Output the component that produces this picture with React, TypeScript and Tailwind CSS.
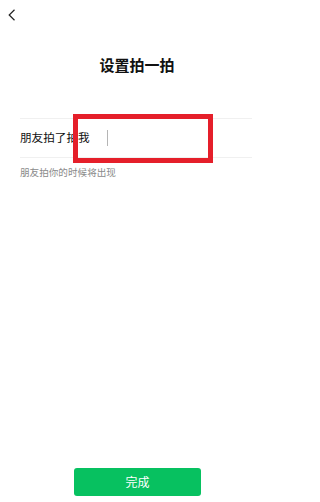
import React from 'react';

export default function App() {
  return (
    <div
      className="relative flex flex-col h-[502px] w-[274px] bg-white overflow-hidden"
      style={{ fontFamily: '"Noto Sans CJK SC", "Noto Sans", sans-serif' }}
    >
      {/* Back */}
      <div className="h-[29px] pl-[8px] pt-[9px]">
        <svg width="8" height="12" viewBox="0 0 8 12" fill="none">
          <path d="M6.5 0.8 L1.2 6 L6.5 11.2" stroke="#222" strokeWidth="1.2" />
        </svg>
      </div>

      {/* Title */}
      <h1 className="mt-[26px] text-center text-[15px] leading-[20px] font-bold text-[#111]">
        设置拍一拍
      </h1>

      {/* Input row */}
      <div className="mt-[43px] mx-[20px] mr-[22px]">
        <div className="border-t border-b border-[#f0f0f0] h-[40px] flex items-center">
          <span className="text-[11.6px] text-[#111] w-[87px]">朋友拍了拍我</span>
          <span className="w-px h-[16px] bg-[#b5b5b5]" />
        </div>
        <p className="mt-[8px] text-[9.6px] leading-[12px] text-[#8a8a8a]">朋友拍你的时候将出现</p>
      </div>

      {/* Done button */}
      <div className="mt-auto mb-[6px] flex justify-center">
        <button className="w-[127px] h-[28px] rounded-[3px] bg-[#07c160] text-white text-[12px] pl-[1px]">
          完成
        </button>
      </div>

      {/* Annotation box */}
      <div className="absolute left-[73px] top-[114px] w-[140px] h-[49px] border-[5px] border-[#e51f2a]" />
    </div>
  );
}
